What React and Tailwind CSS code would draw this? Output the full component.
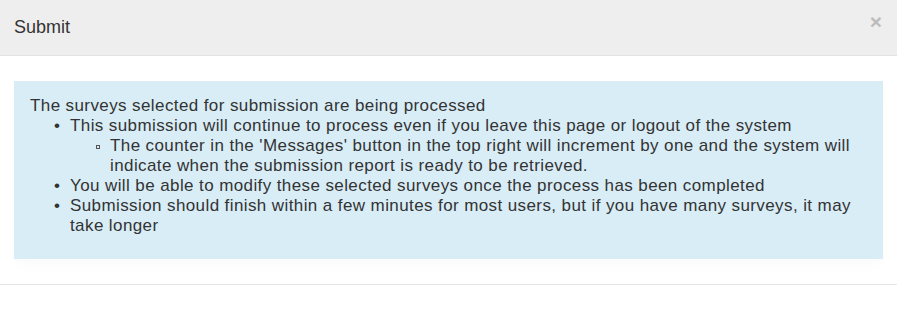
export default function App() {
  const font = { fontFamily: '"Liberation Sans", Arial, sans-serif' };

  return (
    <div className="w-[897px] h-[315px] bg-white text-[#333333] overflow-hidden" style={font}>
      {/* Header */}
      <div className="h-[56px] bg-[#eeeeee] border-b border-[#e2e2e2] flex items-start justify-between pl-[14px] pr-[15px]">
        <h4 className="text-[18px] leading-[20px] mt-[17px]">Submit</h4>
        <button className="text-[21px] leading-none font-bold text-[#bcbcbc] mt-[11px]">×</button>
      </div>

      {/* Body */}
      <div className="px-[14px] pt-[25px] h-[229px] border-b border-[#e5e5e5]">
        <div className="bg-[#d9edf7] pl-[16px] pr-[15px] pt-[15px] h-[178px] text-[17px] tracking-[0.4px] leading-[20px] shadow-[0_8px_10px_rgba(0,0,0,0.015)]">
          <div>The surveys selected for submission are being processed</div>
          <ul className="pl-[24px]">
            <li className="flex">
              <span className="w-[16px] shrink-0">•</span>
              <div>
                <div>This submission will continue to process even if you leave this page or logout of the system</div>
                <ul className="pl-[26px]">
                  <li className="flex">
                    <span className="w-[14px] shrink-0 pt-[9px]">
                      <span className="block w-[4px] h-[4px] border border-[#555555]"></span>
                    </span>
                    <div>
                      The counter in the 'Messages' button in the top right will increment by one and the system will indicate when the submission report is ready to be retrieved.
                    </div>
                  </li>
                </ul>
              </div>
            </li>
            <li className="flex">
              <span className="w-[16px] shrink-0">•</span>
              <div>You will be able to modify these selected surveys once the process has been completed</div>
            </li>
            <li className="flex">
              <span className="w-[16px] shrink-0">•</span>
              <div>Submission should finish within a few minutes for most users, but if you have many surveys, it may take longer</div>
            </li>
          </ul>
        </div>
      </div>
    </div>
  );
}
